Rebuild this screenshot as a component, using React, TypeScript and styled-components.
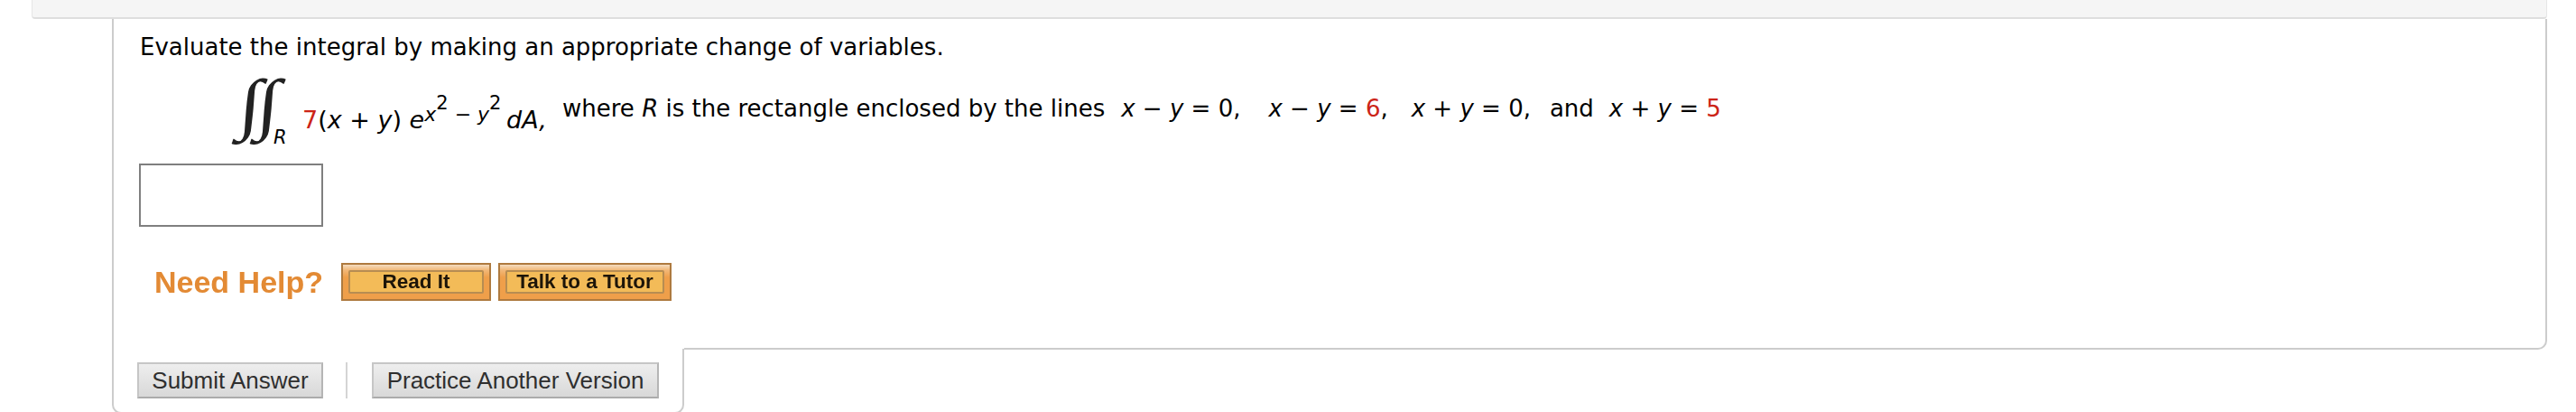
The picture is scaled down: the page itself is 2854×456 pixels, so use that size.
import React from 'react';
import styled, { createGlobalStyle } from 'styled-components';

const GlobalStyle = createGlobalStyle`
  html, body {
    margin: 0;
    padding: 0;
    background: #fff;
  }
`;

const Page = styled.div`
  width: 2854px;
  height: 456px;
  overflow: hidden;
  font-family: "DejaVu Sans", Verdana, sans-serif;
  color: #000;
`;

const TopBar = styled.div`
  box-sizing: border-box;
  width: 2787px;
  height: 21px;
  margin-left: 35px;
  background: #f5f5f5;
  border: 1px solid #e6e6e6;
  border-top: none;
  border-bottom: 2px solid #dedede;
  border-radius: 0 0 4px 4px;
`;

const Question = styled.div`
  box-sizing: border-box;
  width: 2698px;
  height: 339px;
  margin-left: 124px;
  padding: 13px 0 0 29px;
  border-left: 2px solid #ccc;
  border-right: 2px solid #ccc;
`;

const Prompt = styled.p`
  margin: 0;
  font-size: 26px;
  line-height: 36px;
`;

const FormulaRow = styled.div`
  display: flex;
  align-items: flex-start;
  margin-top: 15px;
  height: 80px;
  font-size: 26px;
  line-height: 36px;
  white-space: pre;
`;

const IntegralSign = styled.div`
  display: flex;
  align-items: flex-start;
  width: 68px;
  margin-left: 112px;
  height: 80px;
`;

const IntegralGlyph = styled.span`
  font-family: "Liberation Serif", serif;
  font-size: 75px;
  font-weight: 400;
  line-height: 60px;
  width: 20px;
  transform: scaleX(1.2) skewX(-4deg);
  color: #222;
`;

const Subscript = styled.i`
  font-size: 21px;
  line-height: 24px;
  margin: 55px 0 0 -4px;
`;

const Expression = styled.div`
  width: 288px;
  padding-top: 29px;
  font-size: 27px;
  font-style: italic;
`;

const Lines = styled.div`
  display: flex;
  padding-top: 17px;
`;

const MathGroup = styled.span<{ $gap: number }>`
  margin-left: ${({ $gap }) => $gap}px;
`;

const Exponent = styled.span`
  font-size: 22px;
  line-height: 0;
  vertical-align: 8px;
  margin-right: -3px;
`;

const ExponentPower = styled.span`
  font-size: 21px;
  font-style: normal;
  line-height: 0;
  vertical-align: 13px;
`;

const Upright = styled.span`
  font-style: normal;
`;

const Red = styled.span`
  font-style: normal;
  color: #cc2418;
`;

const AnswerInput = styled.input`
  display: block;
  box-sizing: border-box;
  width: 204px;
  height: 70px;
  margin: 16px 0 0 -1px;
  background: #fff;
  border: 2px solid #7f7f7f;
  border-radius: 0;
  outline: none;
`;

const HelpRow = styled.div`
  display: flex;
  align-items: center;
  margin-top: 40px;
  height: 42px;
`;

const HelpLabel = styled.span`
  width: 223px;
  padding-left: 16px;
  box-sizing: border-box;
  font-family: "Liberation Sans", Arial, sans-serif;
  font-size: 34px;
  font-weight: 700;
  color: #e38a34;
  filter: blur(0.6px);
  white-space: nowrap;
`;

const HelpButton = styled.button<{ $width: number }>`
  box-sizing: border-box;
  width: ${({ $width }) => $width}px;
  height: 42px;
  margin: 0 8px 0 0;
  padding: 6px;
  background: linear-gradient(#f4dcc0 0, #f2b878 6px, #ef9f4a 14px, #ef9f4a 100%);
  border: 2px solid #ae7a3f;
  border-radius: 0;
`;

const HelpButtonFace = styled.span`
  display: flex;
  align-items: center;
  justify-content: center;
  box-sizing: border-box;
  height: 100%;
  background: #f3bb58;
  border: 2px solid #b78d52;
  border-radius: 2px;
  font-family: "Liberation Sans", Arial, sans-serif;
  font-size: 22.5px;
  font-weight: 700;
  color: #1d1509;
  filter: blur(0.6px);
  white-space: nowrap;
`;

const FooterRow = styled.div`
  display: flex;
  align-items: flex-start;
  width: 2698px;
  height: 96px;
  margin-left: 124px;
`;

const ActionTab = styled.div`
  display: flex;
  align-items: flex-start;
  box-sizing: border-box;
  width: 624px;
  height: 98px;
  padding: 41px 0 0 26px;
  border-left: 2px solid #ccc;
  border-bottom: 2px solid #ccc;
  border-bottom-left-radius: 10px;
`;

const TabEdge = styled.div`
  box-sizing: border-box;
  width: 10px;
  height: 72px;
  margin-top: 26px;
  border-right: 2px solid #ccc;
  border-bottom: 2px solid #ccc;
  border-bottom-right-radius: 10px;
`;

const PanelEdge = styled.div`
  flex: 1;
  box-sizing: border-box;
  height: 27px;
  border-right: 2px solid #ccc;
  border-bottom: 2px solid #ccc;
  border-bottom-right-radius: 10px;
`;

const GrayButton = styled.button<{ $width: number }>`
  box-sizing: border-box;
  width: ${({ $width }) => $width}px;
  height: 40px;
  padding: 0;
  background: linear-gradient(#eeeeee, #d8d8d8);
  border: 2px solid #c6c6c6;
  border-bottom-color: #ababab;
  border-right-color: #b5b5b5;
  border-radius: 0;
  font-family: "Liberation Sans", Arial, sans-serif;
  font-size: 26px;
  color: #2f2f2f;
  white-space: nowrap;
`;

const ActionDivider = styled.span`
  width: 2px;
  height: 40px;
  margin: 0 27px 0 25px;
  background: #d4d4d4;
`;

export default function App() {
  return (
    <Page>
      <GlobalStyle />
      <TopBar />
      <Question>
        <Prompt>Evaluate the integral by making an appropriate change of variables.</Prompt>
        <FormulaRow>
          <IntegralSign>
            <IntegralGlyph>∫</IntegralGlyph>
            <IntegralGlyph>∫</IntegralGlyph>
            <Subscript>R</Subscript>
          </IntegralSign>
          <Expression>
            <Red>7</Red>
            <Upright>(</Upright>x <Upright>+</Upright> y<Upright>)</Upright> e
            <Exponent>
              x<ExponentPower>2</ExponentPower> <Upright>−</Upright> y<ExponentPower>2</ExponentPower>
            </Exponent>{' '}
            dA,
          </Expression>
          <Lines>
            <span>
              where <i>R</i> is the rectangle enclosed by the lines
            </span>
            <MathGroup $gap={18}>
              <i>x</i> − <i>y</i> = 0,
            </MathGroup>
            <MathGroup $gap={31}>
              <i>x</i> − <i>y</i> = <Red>6</Red>,
            </MathGroup>
            <MathGroup $gap={26}>
              <i>x</i> + <i>y</i> = 0,
            </MathGroup>
            <MathGroup $gap={21}>and</MathGroup>
            <MathGroup $gap={17}>
              <i>x</i> + <i>y</i> = <Red>5</Red>
            </MathGroup>
          </Lines>
        </FormulaRow>
        <AnswerInput type="text" aria-label="Answer" />
        <HelpRow>
          <HelpLabel>Need Help?</HelpLabel>
          <HelpButton $width={166}>
            <HelpButtonFace>Read It</HelpButtonFace>
          </HelpButton>
          <HelpButton $width={192}>
            <HelpButtonFace>Talk to a Tutor</HelpButtonFace>
          </HelpButton>
        </HelpRow>
      </Question>
      <FooterRow>
        <ActionTab>
          <GrayButton $width={206}>Submit Answer</GrayButton>
          <ActionDivider />
          <GrayButton $width={318}>Practice Another Version</GrayButton>
        </ActionTab>
        <TabEdge />
        <PanelEdge />
      </FooterRow>
    </Page>
  );
}
